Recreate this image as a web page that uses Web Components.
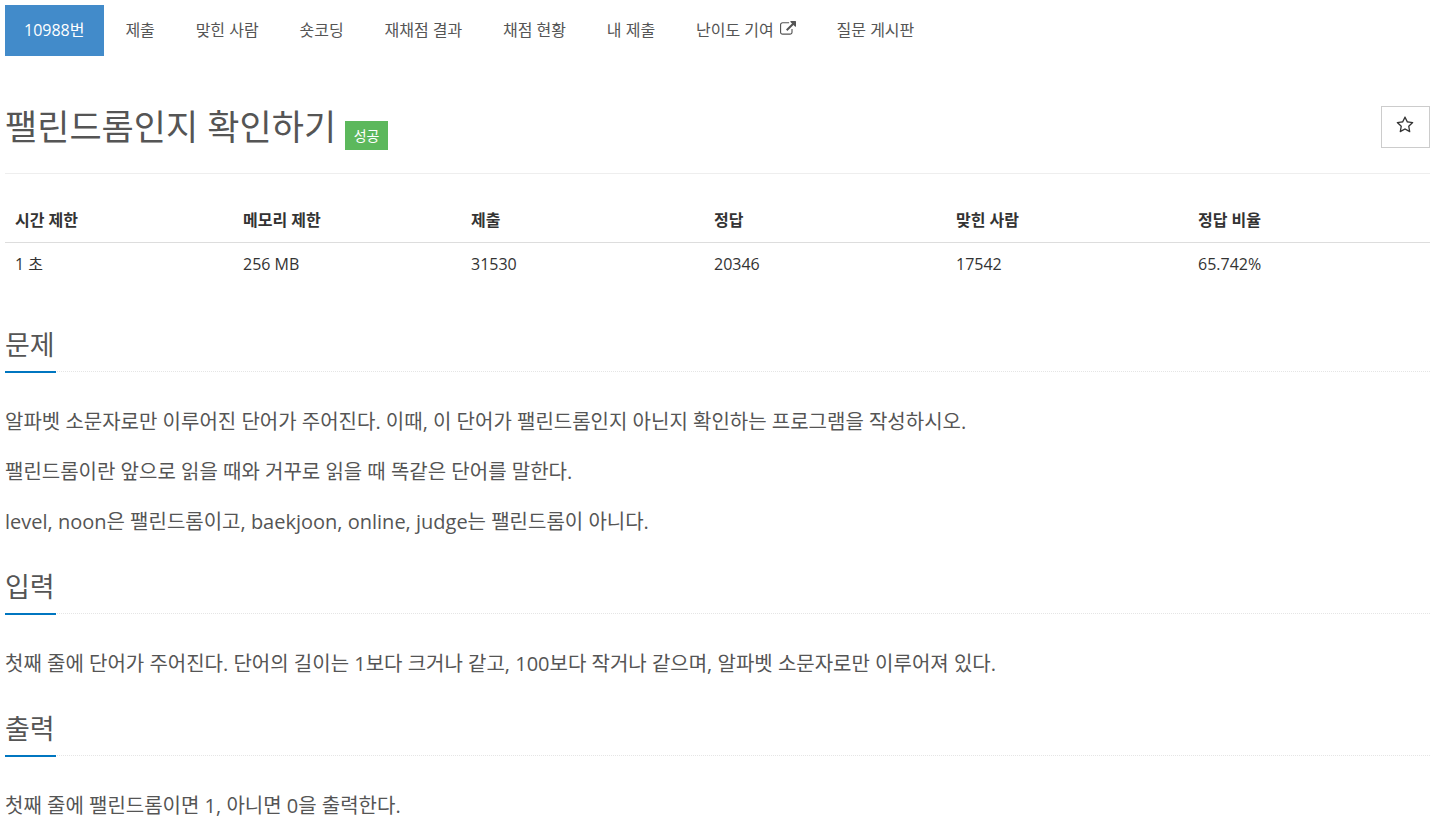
<!DOCTYPE html>
<html lang="ko">
<head>
<meta charset="utf-8">
<title>10988번: 팰린드롬인지 확인하기</title>
<style>
  html, body { margin: 0; background: #fff; }
  body {
    font-family: "Open Sans", "Noto Sans CJK KR", sans-serif;
    font-size: 16px;
    color: #333;
  }
  .page { padding: 5px 15px 0 5px; }
</style>
</head>
<body>
<template id="tab-tpl">
  <style>
    :host { display: block; }
    :host([active]) { margin-right: 0.6px; }
    a {
      display: flex;
      align-items: center;
      box-sizing: border-box;
      height: 51px;
      padding: 0 20px 2px;
      color: #555;
      line-height: 20px;
      white-space: nowrap;
      text-decoration: none;
    }
    :host([active]) a { background: #428bca; color: #fff; width: 99px; padding: 0 0 2px 19px; }
    ::slotted(svg) { width: 16px; height: 16px; margin: -2px 0 0 6px; fill: currentColor; }
  </style>
  <a href="#"><slot></slot><slot name="icon"></slot></a>
</template>

<template id="section-tpl">
  <style>
    :host { display: block; margin-bottom: 31px; }
    .head {
      position: relative;
      border-bottom: 1px dotted #e5e5e5;
      margin-bottom: 35px;
      height: 45px;
    }
    h2 {
      margin: 0;
      font-size: 27px;
      font-weight: 400;
      line-height: 38px;
      color: #555;
    }
    .head::after {
      content: "";
      position: absolute;
      left: 0;
      bottom: -2px;
      width: 51px;
      height: 2px;
      background: #0076c0;
    }
    .body { font-size: 20px; line-height: 30px; color: #555; }
    ::slotted(p) { margin: 0 0 20px; }
  </style>
  <div class="head"><h2><slot name="title"></slot></h2></div>
  <div class="body"><slot></slot></div>
</template>

<div class="page">
  <boj-tabs>
    <boj-tab active>10988번</boj-tab>
    <boj-tab>제출</boj-tab>
    <boj-tab>맞힌 사람</boj-tab>
    <boj-tab>숏코딩</boj-tab>
    <boj-tab>재채점 결과</boj-tab>
    <boj-tab>채점 현황</boj-tab>
    <boj-tab>내 제출</boj-tab>
    <boj-tab>난이도 기여<svg slot="icon" viewBox="0 0 1792 1792"><path d="M1408 928v320q0 119-84.5 203.5t-203.5 84.5h-832q-119 0-203.5-84.5t-84.5-203.5v-832q0-119 84.5-203.5t203.5-84.5h704q14 0 23 9t9 23v64q0 14-9 23t-23 9h-704q-66 0-113 47t-47 113v832q0 66 47 113t113 47h832q66 0 113-47t47-113v-320q0-14 9-23t23-9h64q14 0 23 9t9 23zm384-864v512q0 26-19 45t-45 19-45-19l-176-176-652 652q-10 10-23 10t-23-10l-114-114q-10-10-10-23t10-23l652-652-176-176q-19-19-19-45t19-45 45-19h512q26 0 45 19t19 45z"/></svg></boj-tab>
    <boj-tab>질문 게시판</boj-tab>
  </boj-tabs>

  <boj-title label="성공">팰린드롬인지 확인하기</boj-title>

  <boj-stats
    heads="시간 제한|메모리 제한|제출|정답|맞힌 사람|정답 비율"
    cells="1 초|256 MB|31530|20346|17542|65.742%"></boj-stats>

  <boj-section>
    <span slot="title">문제</span>
    <p>알파벳 소문자로만 이루어진 단어가 주어진다. 이때, 이 단어가 팰린드롬인지 아닌지 확인하는 프로그램을 작성하시오.</p>
    <p>팰린드롬이란 앞으로 읽을 때와 거꾸로 읽을 때 똑같은 단어를 말한다.</p>
    <p>level, noon은 팰린드롬이고, baekjoon, online, judge는 팰린드롬이 아니다.</p>
  </boj-section>
  <boj-section>
    <span slot="title">입력</span>
    <p>첫째 줄에 단어가 주어진다. 단어의 길이는 1보다 크거나 같고, 100보다 작거나 같으며, 알파벳 소문자로만 이루어져 있다.</p>
  </boj-section>
  <boj-section>
    <span slot="title">출력</span>
    <p>첫째 줄에 팰린드롬이면 1, 아니면 0을 출력한다.</p>
  </boj-section>
</div>

<script>
// simple helper, clones a template into an open shadow root
function fromTemplate(el, id) {
  el.attachShadow({ mode: 'open' });
  el.shadowRoot.appendChild(document.getElementById(id).content.cloneNode(true));
}

class BojTabs extends HTMLElement {
  constructor() {
    super();
    this.attachShadow({ mode: 'open' });
    this.shadowRoot.innerHTML = `
      <style>
        :host { display: flex; gap: 0.8px; }
      </style>
      <slot></slot>
    `;
  }
}

class BojTab extends HTMLElement {
  constructor() {
    super();
    fromTemplate(this, 'tab-tpl');
  }
}

class BojTitle extends HTMLElement {
  constructor() {
    super();
    this.attachShadow({ mode: 'open' });
    const label = this.getAttribute('label') || '';
    this.shadowRoot.innerHTML = `
      <style>
        :host {
          display: flex;
          justify-content: space-between;
          align-items: flex-start;
          margin-top: 48px;
          padding-bottom: 23px;
          border-bottom: 1px solid #eee;
        }
        h1 {
          margin: 0;
          font-size: 35px;
          font-weight: 400;
          line-height: 46px;
          color: #555;
        }
        .label {
          display: inline-block;
          vertical-align: -1px;
          padding: 0 8.5px;
          background: #5cb85c;
          color: #fff;
          font-size: 14px;
          line-height: 29px;
        }
        button {
          width: 49px;
          height: 42px;
          margin-top: 2px;
          padding: 0;
          background: #fff;
          border: 1px solid #ccc;
          display: flex;
          align-items: center;
          justify-content: center;
        }
        svg { width: 18px; height: 18px; margin: -5px 1px 0 0; fill: #333; }
      </style>
      <h1><slot></slot> <span class="label">${label}</span></h1>
      <button type="button" aria-label="star">
        <svg viewBox="0 0 1792 1792"><path d="M1201 1004l306-297-422-62-189-382-189 382-422 62 306 297-73 421 378-199 377 199zm527-357q0 22-26 48l-363 354 86 500q1 7 1 20 0 50-41 50-19 0-40-12l-449-236-449 236q-22 12-40 12-21 0-31.5-14.5t-10.5-35.5q0-6 2-20l86-500-364-354q-25-27-25-48 0-37 56-46l502-73 225-455q19-41 49-41t49 41l225 455 502 73q56 9 56 46z"/></svg>
      </button>
    `;
  }
}

class BojStats extends HTMLElement {
  constructor() {
    super();
    this.attachShadow({ mode: 'open' });
    const heads = (this.getAttribute('heads') || '').split('|');
    const cells = (this.getAttribute('cells') || '').split('|');
    this.shadowRoot.innerHTML = `
      <style>
        :host { display: block; margin: 25px 0 41px; }
        .row {
          display: grid;
          grid-template-columns: 228px 228px 243px 242px 242px 1fr;
        }
        .row > div { padding: 9px 10px; line-height: 24px; }
        .heads > div { padding-bottom: 10px; }
        .heads { border-bottom: 1px solid #ddd; font-weight: 700; color: #333; }
      </style>
      <div class="row heads">${heads.map(h => `<div>${h}</div>`).join('')}</div>
      <div class="row">${cells.map(c => `<div>${c}</div>`).join('')}</div>
    `;
  }
}

class BojSection extends HTMLElement {
  constructor() {
    super();
    fromTemplate(this, 'section-tpl');
  }
}

customElements.define('boj-tabs', BojTabs);
customElements.define('boj-tab', BojTab);
customElements.define('boj-title', BojTitle);
customElements.define('boj-stats', BojStats);
customElements.define('boj-section', BojSection);
</script>
</body>
</html>
